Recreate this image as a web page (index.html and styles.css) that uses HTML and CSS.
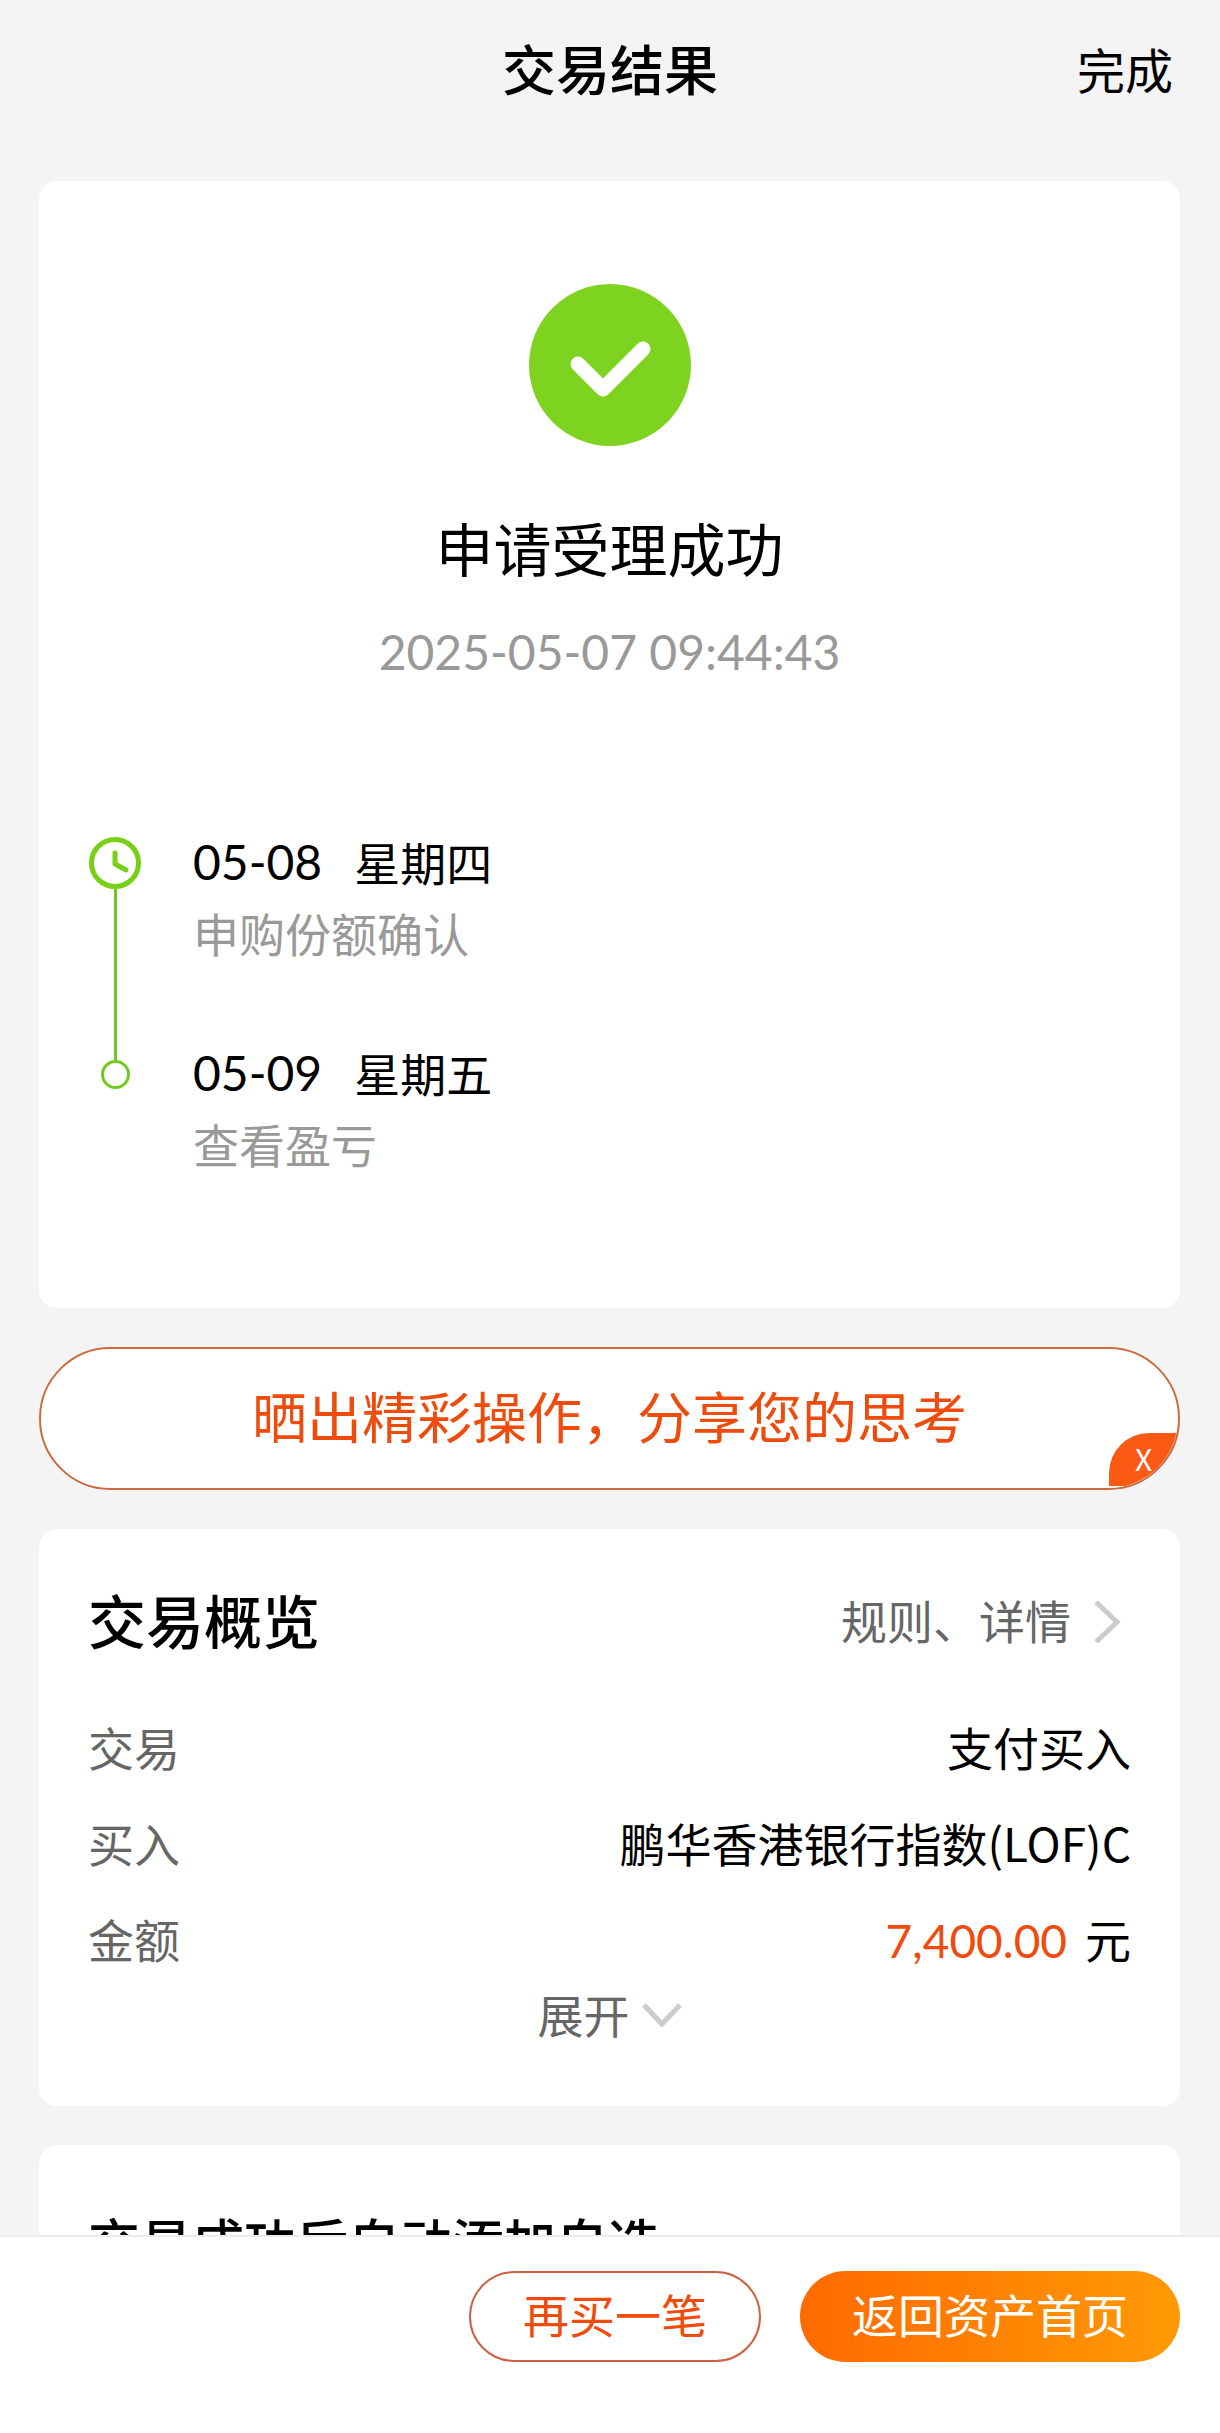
FILE: index.html
```html
<!DOCTYPE html>
<html lang="zh-CN">
<head>
  <meta charset="UTF-8">
  <meta name="viewport" content="width=device-width, initial-scale=1.0">
  <title>交易结果</title>
  <link rel="stylesheet" href="styles.css">
</head>
<body>
  <header class="header">
    <h1>交易结果</h1>
    <a href="#" class="done">完成</a>
  </header>

  <main class="content">
    <section class="card result">
      <svg class="success-icon" viewBox="0 0 162 162" aria-hidden="true">
        <circle cx="81" cy="81" r="81" fill="#7ed321"/>
        <path d="M49 80 L74 105 L114 65" fill="none" stroke="#fff" stroke-width="15" stroke-linecap="round" stroke-linejoin="round"/>
      </svg>
      <h2>申请受理成功</h2>
      <time class="result-time">2025-05-07 09:44:43</time>

      <ol class="timeline">
        <li class="step">
          <div class="marker">
            <svg class="clock" viewBox="0 0 52 52" aria-hidden="true">
              <circle cx="26" cy="26" r="23.5" fill="none" stroke="#78d016" stroke-width="5"/>
              <path d="M26 16 V27 L37 33" fill="none" stroke="#78d016" stroke-width="5" stroke-linecap="round" stroke-linejoin="round"/>
            </svg>
            <span class="line"></span>
          </div>
          <div class="step-text">
            <p class="step-date"><span>05-08</span><span>星期四</span></p>
            <p class="step-desc">申购份额确认</p>
          </div>
        </li>
        <li class="step">
          <div class="marker">
            <span class="line"></span>
            <span class="dot"></span>
          </div>
          <div class="step-text">
            <p class="step-date"><span>05-09</span><span>星期五</span></p>
            <p class="step-desc">查看盈亏</p>
          </div>
        </li>
      </ol>
    </section>

    <div class="share">
      <a href="#" class="share-link">晒出精彩操作，分享您的思考</a>
      <button type="button" class="share-close">X</button>
    </div>

    <section class="card overview">
      <div class="overview-head">
        <h2>交易概览</h2>
        <a href="#" class="more">规则、详情
          <svg class="arrow" viewBox="0 0 48 48" aria-hidden="true">
            <path d="M13 7 L34 27 L13 47" fill="none" stroke="#ccc" stroke-width="5"/>
          </svg>
        </a>
      </div>
      <dl class="rows">
        <div class="row"><dt>交易</dt><dd>支付买入</dd></div>
        <div class="row"><dt>买入</dt><dd>鹏华香港银行指数(LOF)C</dd></div>
        <div class="row"><dt>金额</dt><dd><span class="amount">7,400.00</span>元</dd></div>
      </dl>
      <button type="button" class="expand">展开
        <svg viewBox="0 0 40 32" aria-hidden="true">
          <path d="M2 8 L20 27 L38 8" fill="none" stroke="#ccc" stroke-width="5"/>
        </svg>
      </button>
    </section>

    <section class="card favorite">
      <h3>交易成功后自动添加自选</h3>
    </section>
  </main>

  <footer class="footer">
    <button type="button" class="btn btn-outline">再买一笔</button>
    <button type="button" class="btn btn-primary">返回资产首页</button>
  </footer>
</body>
</html>
```

FILE: styles.css
```css
* {
  box-sizing: border-box;
  margin: 0;
  padding: 0;
}

body {
  font-family: 'Noto Sans CJK SC', sans-serif;
  font-size: 46px;
  line-height: 60px;
  color: #000;
  background-color: #f4f4f4;
  display: flex;
  flex-direction: column;
  height: 100vh;
  overflow: hidden;
}

a {
  color: inherit;
  text-decoration: none;
}

button {
  font: inherit;
  color: inherit;
  background: none;
  border: none;
  cursor: pointer;
}

h2 {
  font-size: 58px;
  line-height: 80px;
  font-weight: 400;
}

/* Top bar */
.header {
  display: grid;
  grid-template-columns: 1fr auto 1fr;
  align-items: center;
  padding: 32px 47px 77px;
}

.header h1 {
  grid-column: 2;
  font-size: 54px;
  line-height: 72px;
  font-weight: 500;
}

.done {
  justify-self: end;
  font-size: 48px;
}

.content {
  flex: 1;
  min-height: 0;
  overflow-y: auto;
  scrollbar-width: none;
  display: flex;
  flex-direction: column;
  gap: 39px;
  padding: 0 40px 0 39px;
}

.card {
  flex-shrink: 0;
  background: #fff;
  border-radius: 18px;
  padding: 50px 49px;
}

/* Result */
.result {
  display: flex;
  flex-direction: column;
  align-items: center;
  padding-top: 103px;
  padding-bottom: 129px;
}

.success-icon {
  width: 162px;
  height: 162px;
  margin-bottom: 61px;
}

.result-time {
  font-family: Lato, sans-serif;
  font-size: 48px;
  color: #999;
  margin-top: 35px;
}

/* Timeline */
.timeline {
  align-self: stretch;
  list-style: none;
  margin-top: 144px;
}

.step {
  display: flex;
  gap: 51px;
  line-height: 71px;
}

.step:not(:last-child) .step-text {
  padding-bottom: 69px;
}

.marker {
  display: flex;
  flex-direction: column;
  align-items: center;
  width: 54px;
}

.clock {
  width: 52px;
  height: 52px;
  margin-top: 11px;
}

.line {
  flex: 1;
  width: 3px;
  background: #72c81e;
}

.step:last-child .line {
  flex: none;
  height: 23px;
}

.dot {
  width: 29px;
  height: 29px;
  border: 3px solid #72c81e;
  border-radius: 50%;
}

.step-date {
  display: flex;
  gap: 32px;
}

.step-date span:first-child {
  font-family: Lato, sans-serif;
  font-size: 48px;
}

.step-desc {
  color: #999;
}

/* Share banner */
.share {
  position: relative;
  flex-shrink: 0;
  overflow: hidden;
  background: #fff;
  border: 2px solid #cc6b40;
  border-radius: 72px;
}

.share-link {
  display: block;
  padding-bottom: 8px;
  font-size: 55px;
  line-height: 131px;
  text-align: center;
  color: #ee4b0c;
}

.share-close {
  position: absolute;
  right: 0;
  bottom: 2px;
  width: 69px;
  height: 53px;
  padding-bottom: 4px;
  font-size: 30px;
  line-height: 48px;
  color: #fff;
  background: #fa5a14;
  border-top-left-radius: 40px;
}

/* Overview */
.overview {
  padding-bottom: 66px;
}

.overview-head {
  display: flex;
  justify-content: space-between;
  align-items: center;
  margin-bottom: 39px;
}

.overview-head h2 {
  font-weight: 500;
}

.more {
  display: flex;
  align-items: center;
  gap: 12px;
  color: #666;
}

.arrow {
  width: 48px;
  height: 48px;
}

.row {
  display: flex;
  justify-content: space-between;
  line-height: 96px;
}

.row dt {
  color: #666;
}

.amount {
  margin-right: 18px;
  font-family: Lato, sans-serif;
  line-height: 60px;
  color: #f04a0c;
}

.expand {
  display: flex;
  align-items: center;
  gap: 12px;
  margin: 0 auto;
  line-height: 54px;
  color: #666;
}

.expand svg {
  width: 40px;
  height: 32px;
}

.favorite {
  padding-top: 56px;
}

.favorite h3 {
  font-size: 52px;
  line-height: 80px;
  font-weight: 500;
}

/* Bottom bar */
.footer {
  display: flex;
  justify-content: flex-end;
  gap: 39px;
  padding: 34px 40px 71px;
  background: #fff;
  border-top: 2px solid #ececec;
}

.btn {
  padding: 0 52px 6px;
  line-height: 85px;
  border-radius: 46px;
}

.btn-outline {
  line-height: 81px;
  border: 2px solid #cc6040;
  color: #ee4b0c;
}

.btn-primary {
  color: #fff;
  background: linear-gradient(to right, #ff6a00, #ff9a05);
}
```
